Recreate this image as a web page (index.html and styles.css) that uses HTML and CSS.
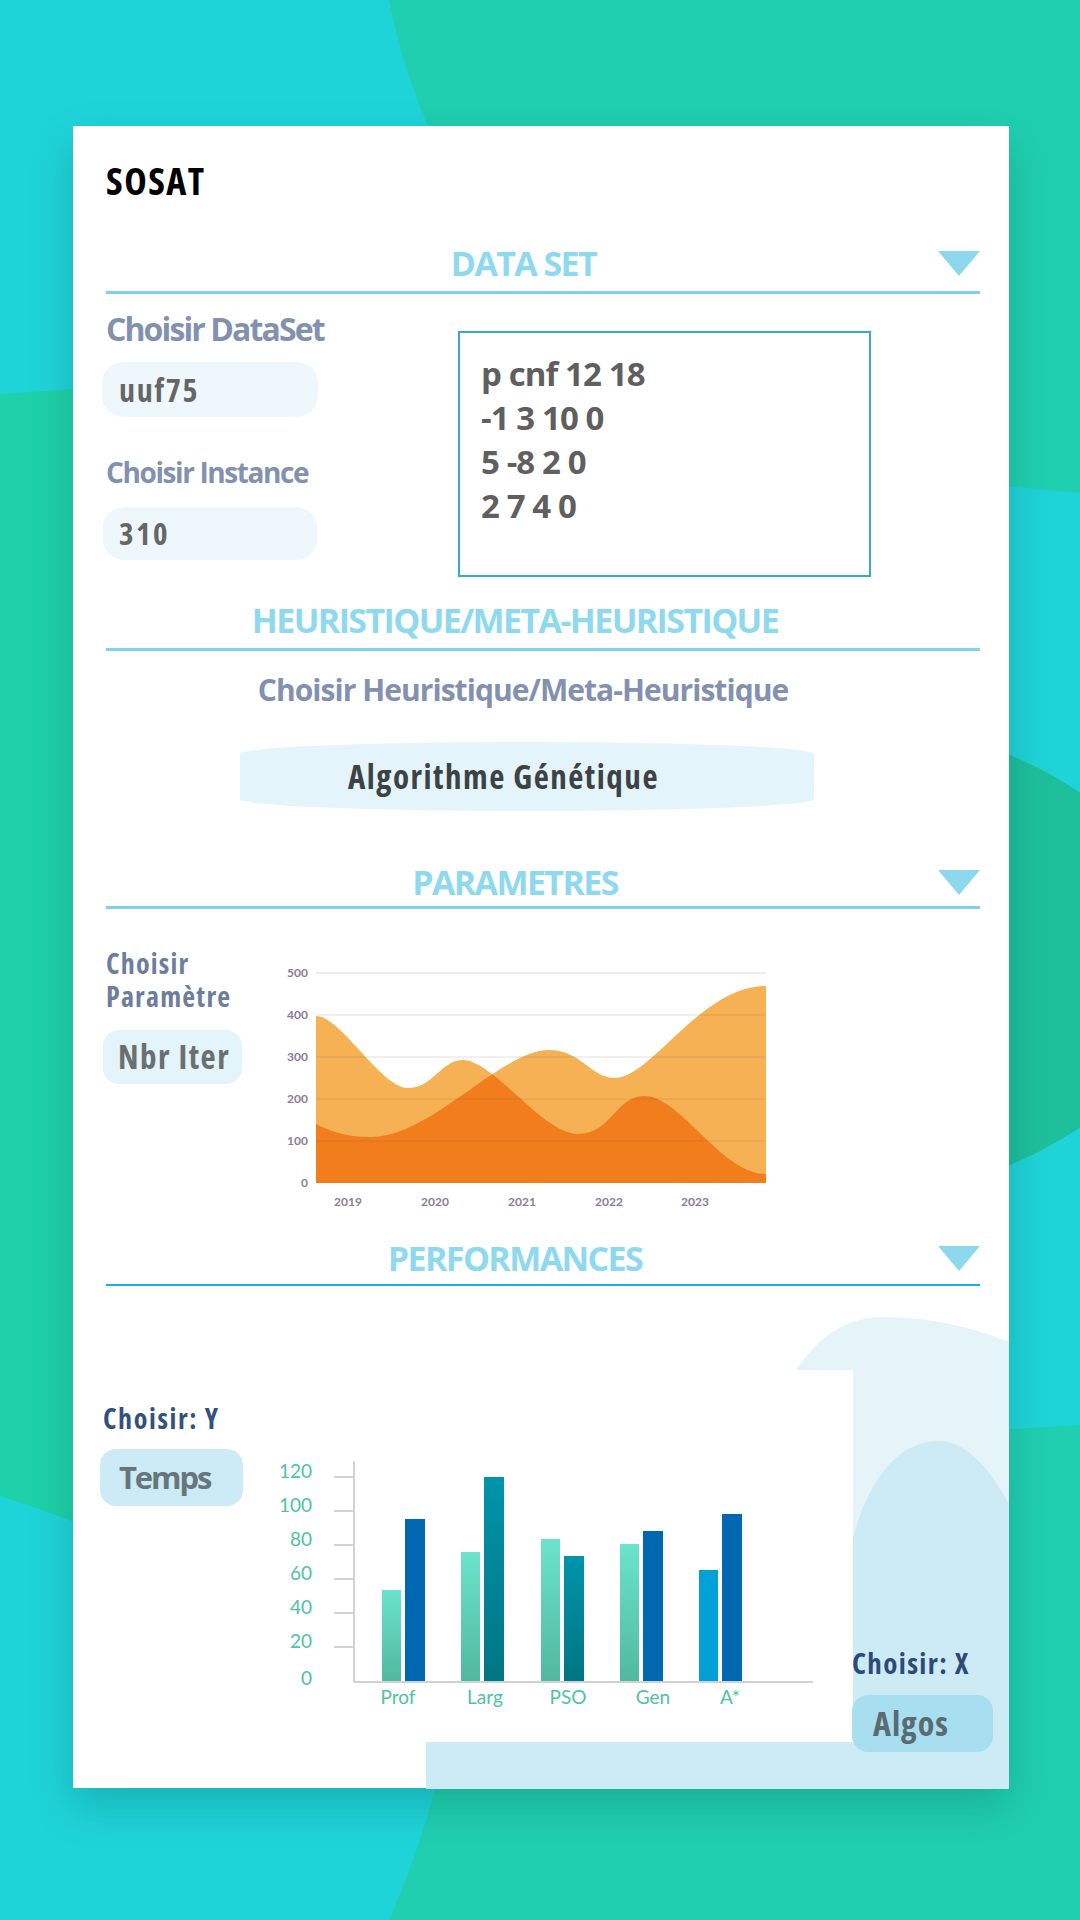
FILE: index.html
```html
<!DOCTYPE html>
<html lang="fr">
<head>
<meta charset="utf-8">
<title>SOSAT</title>
<link rel="stylesheet" href="styles.css">
</head>
<body>
<svg class="bg" viewBox="0 0 1080 1920" width="1080" height="1920" aria-hidden="true">
  <rect width="1080" height="1920" fill="#1fd4d9"/>
  <path d="M389,0 Q402,70 438,150 L440,1770 Q420,1850 389,1920 H1080 V0 Z" fill="#20cfb0"/>
  <path d="M0,394 L120,386 L120,1540 Q60,1515 0,1496 Z" fill="#1fd1a8"/>
  <path d="M880,481 Q1000,484 1080,493 L1080,1425 Q1000,1430 880,1436 Z" fill="#1fd4d9"/>
  <ellipse cx="785" cy="960" rx="400" ry="248" fill="#1ec09c"/>
</svg>

<main class="card">
  <h1 class="title">SOSAT</h1>

  <section class="section">
    <div class="sec-head">
      <h2 class="sec-title sec-title-ds">DATA SET</h2>
      <span class="caret-slot"><span class="caret"></span></span>
    </div>
    <div class="dataset">
      <div class="ds-col">
        <div class="label label-lg">Choisir DataSet</div>
        <div class="pill pill-ds">uuf75</div>
        <div class="label label-md">Choisir Instance</div>
        <div class="pill pill-inst">310</div>
      </div>
      <pre class="cnf">p cnf 12 18
-1 3 10 0
5 -8 2 0
2 7 4 0</pre>
    </div>
  </section>

  <section class="section sec-heur">
    <div class="sec-head">
      <h2 class="sec-title">HEURISTIQUE/META-HEURISTIQUE</h2>
      <span class="caret-slot"></span>
    </div>
    <div class="heur-label">Choisir Heuristique/Meta-Heuristique</div>
    <div class="algo-pill">Algorithme Génétique</div>
  </section>

  <section class="section sec-param">
    <div class="sec-head sec-head-tight">
      <h2 class="sec-title">PARAMETRES</h2>
      <span class="caret-slot"><span class="caret"></span></span>
    </div>
    <div class="param-row">
      <div class="param-col">
        <div class="label label-param"><div class="param-line">Choisir</div><div class="param-line">Paramètre</div></div>
        <div class="pill pill-nbr">Nbr Iter</div>
      </div>
      <svg class="area-chart" viewBox="0 0 500 255" width="500" height="255">
        <defs>
          <clipPath id="clipS1">
            <path d="M35,55 C60,55 100,127 127,127 C152,127 160,99 182,99 C212,99 262,173 297,173 C330,173 335,135 363,135 C400,135 440,213 485,213 V222 H35 Z"/>
          </clipPath>
        </defs>
        <line class="grid-base" x1="35" y1="12" x2="485" y2="12"/>
        <path class="area-light" d="M35,55 C60,55 100,127 127,127 C152,127 160,99 182,99 C212,99 262,173 297,173 C330,173 335,135 363,135 C400,135 440,213 485,213 V222 H35 Z"/>
        <path class="area-light" d="M35,163 C55,173 70,176 90,176 C150,176 220,89 268,89 C300,89 310,117 334,117 C370,117 420,25 485,25 V222 H35 Z"/>
        <path class="area-dark" clip-path="url(#clipS1)" d="M35,163 C55,173 70,176 90,176 C150,176 220,89 268,89 C300,89 310,117 334,117 C370,117 420,25 485,25 V222 H35 Z"/>
        <g class="grid-over">
          <line x1="35" y1="54" x2="485" y2="54"/>
          <line x1="35" y1="96" x2="485" y2="96"/>
          <line x1="35" y1="138" x2="485" y2="138"/>
          <line x1="35" y1="180" x2="485" y2="180"/>
        </g>
        <g class="area-ylab">
          <text x="27" y="16">500</text>
          <text x="27" y="58">400</text>
          <text x="27" y="100">300</text>
          <text x="27" y="142">200</text>
          <text x="27" y="184">100</text>
          <text x="27" y="226">0</text>
        </g>
        <g class="area-xlab">
          <text x="67" y="245">2019</text>
          <text x="154" y="245">2020</text>
          <text x="241" y="245">2021</text>
          <text x="328" y="245">2022</text>
          <text x="414" y="245">2023</text>
        </g>
      </svg>
    </div>
  </section>

  <section class="section sec-perf">
    <div class="sec-head sec-head-perf">
      <h2 class="sec-title">PERFORMANCES</h2>
      <span class="caret-slot"><span class="caret"></span></span>
    </div>
    <div class="perf-body">
      <svg class="perf-deco" viewBox="0 0 936 503" width="936" height="503" aria-hidden="true">
        <path d="M723,84 C745,50 775,31 809,31 C860,31 900,42 936,56 V503 H723 Z" fill="#e4f4f9"/>
        <rect x="600" y="84" width="180" height="372" fill="#ffffff"/>
        <path d="M780,252 C795,195 825,155 865,155 C895,155 918,185 936,218 V503 H353 V456 H780 Z" fill="#cdebf5"/>
      </svg>
      <div class="perf-row">
        <div class="y-col">
          <div class="label label-axis label-y">Choisir: Y</div>
          <div class="pill pill-temps">Temps</div>
        </div>
        <svg class="bar-chart" viewBox="0 0 560 265" width="560" height="265">
          <defs>
            <linearGradient id="gLight" x1="0" y1="0" x2="0" y2="1">
              <stop offset="0" stop-color="#6ae4cb"/>
              <stop offset="1" stop-color="#52b89f"/>
            </linearGradient>
            <linearGradient id="gTeal" x1="0" y1="0" x2="0" y2="1">
              <stop offset="0" stop-color="#0094aa"/>
              <stop offset="1" stop-color="#007583"/>
            </linearGradient>
          </defs>
          <g class="bar-axis">
            <line x1="64" y1="10" x2="64" y2="231"/>
            <line x1="64" y1="231" x2="523" y2="231"/>
            <line x1="44" y1="26" x2="64" y2="26"/>
            <line x1="44" y1="60" x2="64" y2="60"/>
            <line x1="44" y1="94" x2="64" y2="94"/>
            <line x1="44" y1="128" x2="64" y2="128"/>
            <line x1="44" y1="162" x2="64" y2="162"/>
            <line x1="44" y1="196" x2="64" y2="196"/>
          </g>
          <g class="bar-ylab">
            <text x="22" y="27">120</text>
            <text x="22" y="61">100</text>
            <text x="22" y="95">80</text>
            <text x="22" y="129">60</text>
            <text x="22" y="163">40</text>
            <text x="22" y="197">20</text>
            <text x="22" y="234">0</text>
          </g>
          <rect x="92" y="139" width="19" height="91" fill="url(#gLight)"/>
          <rect x="115" y="68" width="20" height="162" fill="#0068b1"/>
          <rect x="171" y="101" width="19" height="129" fill="url(#gLight)"/>
          <rect x="194" y="26" width="20" height="204" fill="url(#gTeal)"/>
          <rect x="251" y="88" width="19" height="142" fill="url(#gLight)"/>
          <rect x="274" y="105" width="20" height="125" fill="url(#gTeal)"/>
          <rect x="330" y="93" width="19" height="137" fill="url(#gLight)"/>
          <rect x="353" y="80" width="20" height="150" fill="#0068b1"/>
          <rect x="409" y="119" width="19" height="111" fill="#00a1d7"/>
          <rect x="432" y="63" width="20" height="167" fill="#0068b1"/>
          <g class="bar-xlab">
            <text x="108" y="253">Prof</text>
            <text x="195" y="253">Larg</text>
            <text x="278" y="253">PSO</text>
            <text x="363" y="253">Gen</text>
            <text x="440" y="253">A*</text>
          </g>
        </svg>
        <div class="x-col">
          <div class="label label-axis label-x">Choisir: X</div>
          <div class="pill pill-algos">Algos</div>
        </div>
      </div>
    </div>
  </section>
</main>
</body>
</html>
```

FILE: styles.css
```css
html, body {
  margin: 0;
}

body {
  position: relative;
  width: 1080px;
  height: 1920px;
  box-sizing: border-box;
  padding: 126px 0 0 73px;
  overflow: hidden;
  background: #1fd4d9;
  font-family: "Open Sans", "Noto Sans", sans-serif;
}

.bg {
  position: absolute;
  top: 0;
  left: 0;
  z-index: 0;
  display: block;
}

.card {
  position: relative;
  z-index: 1;
  width: 936px;
  height: 1662px;
  box-sizing: border-box;
  padding: 31px 29px 0 33px;
  background: #ffffff;
  box-shadow: 0 18px 40px rgba(0, 60, 60, 0.22);
}

.title {
  margin: 0;
  font-size: 38px;
  line-height: 46px;
  font-weight: 700;
  font-stretch: 75%;
  letter-spacing: 1.5px;
  color: #000;
}

/* section headers */
.sec-head {
  display: flex;
  align-items: flex-start;
  margin-top: 40px;
  padding-bottom: 7px;
  border-bottom: 3px solid #7fd2ea;
}

.sec-heur .sec-head { margin-top: 23px; }
.sec-param .sec-head { margin-top: 51px; }
.sec-perf .sec-head { margin-top: 22px; }

.sec-head-tight { padding-bottom: 3px; }

.sec-head-perf {
  padding-bottom: 5px;
  border-bottom: 2px solid #1cb0e2;
}

.sec-title {
  flex: 1;
  margin: 0;
  text-align: center;
  font-size: 34px;
  line-height: 41px;
  font-weight: 700;
  letter-spacing: -1.6px;
  color: #8fd9ef;
}

.sec-title-ds {
  padding-left: 17px;
}

.caret-slot {
  display: flex;
  justify-content: flex-end;
  width: 56px;
  padding-top: 8px;
}

.caret {
  width: 0;
  height: 0;
  border-left: 21px solid transparent;
  border-right: 21px solid transparent;
  border-top: 25px solid #8ed8ee;
}

/* labels & pills */
.label {
  font-weight: 700;
  color: #8391b0;
}

.label-lg {
  margin-top: 16px;
  font-size: 32px;
  line-height: 38px;
  letter-spacing: -1.9px;
}

.label-md {
  margin-top: 38px;
  font-size: 28px;
  line-height: 34px;
  letter-spacing: -1.4px;
}

.pill {
  box-sizing: border-box;
  font-weight: 700;
  white-space: nowrap;
}

.pill-ds {
  width: 216px;
  height: 55px;
  margin: 14px 0 0 -4px;
  padding-left: 17px;
  border-radius: 22px / 20px;
  background: #eef8fc;
  font-size: 32px;
  line-height: 55px;
  font-stretch: 75%;
  letter-spacing: 1.7px;
  color: #666;
}

.pill-inst {
  width: 214px;
  height: 53px;
  margin: 18px 0 0 -3px;
  padding-left: 16px;
  border-radius: 22px / 20px;
  background: #eef8fc;
  font-size: 31px;
  line-height: 53px;
  font-stretch: 75%;
  letter-spacing: 2.5px;
  color: #666;
}

/* dataset */
.dataset {
  display: flex;
  align-items: flex-start;
}

.ds-col {
  flex: 0 0 352px;
}

.cnf {
  box-sizing: border-box;
  width: 413px;
  height: 246px;
  margin: 37px 0 0;
  padding: 19px 0 0 21px;
  border: 2px solid #3aaac4;
  font-family: "Open Sans", "Noto Sans", sans-serif;
  font-size: 33px;
  line-height: 44px;
  font-weight: 700;
  letter-spacing: -0.9px;
  color: #5f5f5f;
  white-space: pre;
}

/* heuristique */
.heur-label {
  margin-top: 21px;
  padding-right: 40px;
  text-align: center;
  font-size: 30px;
  line-height: 36px;
  font-weight: 700;
  letter-spacing: -0.95px;
  color: #8391b0;
}

.algo-pill {
  box-sizing: border-box;
  width: 574px;
  height: 69px;
  margin: 34px 0 0 134px;
  padding-left: 108px;
  border-radius: 50% / 12px;
  background: #e3f4fa;
  font-size: 33px;
  line-height: 69px;
  font-weight: 700;
  font-stretch: 75%;
  letter-spacing: 1.5px;
  color: #3d4245;
}

/* parametres */
.param-row {
  display: flex;
  align-items: flex-start;
}

.param-col {
  flex: 0 0 175px;
}

.label-param {
  margin-top: 38px;
  font-size: 28px;
  font-stretch: 75%;
  letter-spacing: 1.2px;
  color: #6d7d9d;
}

.param-line {
  height: 33px;
  line-height: 33px;
}

.pill-nbr {
  width: 139px;
  height: 54px;
  margin: 17px 0 0 -3px;
  padding-left: 15px;
  border-radius: 16px;
  background: #e3f4fa;
  font-size: 33px;
  line-height: 54px;
  font-stretch: 75%;
  letter-spacing: 1.5px;
  color: #6a7070;
}

.area-chart {
  display: block;
  margin-top: 52px;
}

.grid-base {
  stroke: #ededed;
  stroke-width: 2;
}

.grid-over line {
  stroke: rgba(110, 80, 60, 0.09);
  stroke-width: 2;
}

.area-light { fill: #f6b155; }
.area-dark { fill: #f27d1d; }

.area-ylab text,
.area-xlab text {
  font-family: Lato, "Open Sans", sans-serif;
  font-size: 12px;
  font-weight: 700;
  fill: #8d7b99;
}

.area-ylab text { text-anchor: end; }
.area-xlab text { text-anchor: middle; }

/* performances */
.perf-body {
  position: relative;
  height: 503px;
}

.perf-deco {
  position: absolute;
  top: 0;
  left: -33px;
  display: block;
}

.perf-row {
  position: relative;
  display: flex;
  align-items: flex-start;
  padding-top: 115px;
}

.y-col {
  flex: 0 0 184px;
}

.label-axis {
  font-size: 28px;
  line-height: 34px;
  font-stretch: 75%;
  letter-spacing: 1.6px;
  color: #34507e;
}

.label-y {
  margin-left: -3px;
}

.pill-temps {
  width: 143px;
  height: 57px;
  margin: 14px 0 0 -6px;
  padding-left: 19px;
  border-radius: 16px;
  background: #ccebf6;
  font-size: 31px;
  line-height: 57px;
  letter-spacing: -2.1px;
  color: #67767b;
}

.bar-chart {
  display: block;
  flex: 0 0 560px;
  margin-top: 50px;
  overflow: visible;
}

.bar-axis line {
  stroke: #d2d2d2;
  stroke-width: 2;
}

.bar-ylab text,
.bar-xlab text {
  font-family: Lato, "Open Sans", sans-serif;
  font-size: 19px;
  font-weight: 400;
  fill: #50c2a2;
}

.bar-ylab text { text-anchor: end; }
.bar-xlab text { text-anchor: middle; }

.x-col {
  margin: 244px 0 0 2px;
}

.label-x {
  font-size: 29px;
  line-height: 35px;
  letter-spacing: 1.35px;
  color: #2d4a7b;
}

.pill-algos {
  width: 141px;
  height: 57px;
  margin-top: 15px;
  padding-left: 21px;
  border-radius: 16px;
  background: #a7dff0;
  font-size: 34px;
  line-height: 57px;
  font-stretch: 75%;
  letter-spacing: 1px;
  color: #5b6b72;
}
```
